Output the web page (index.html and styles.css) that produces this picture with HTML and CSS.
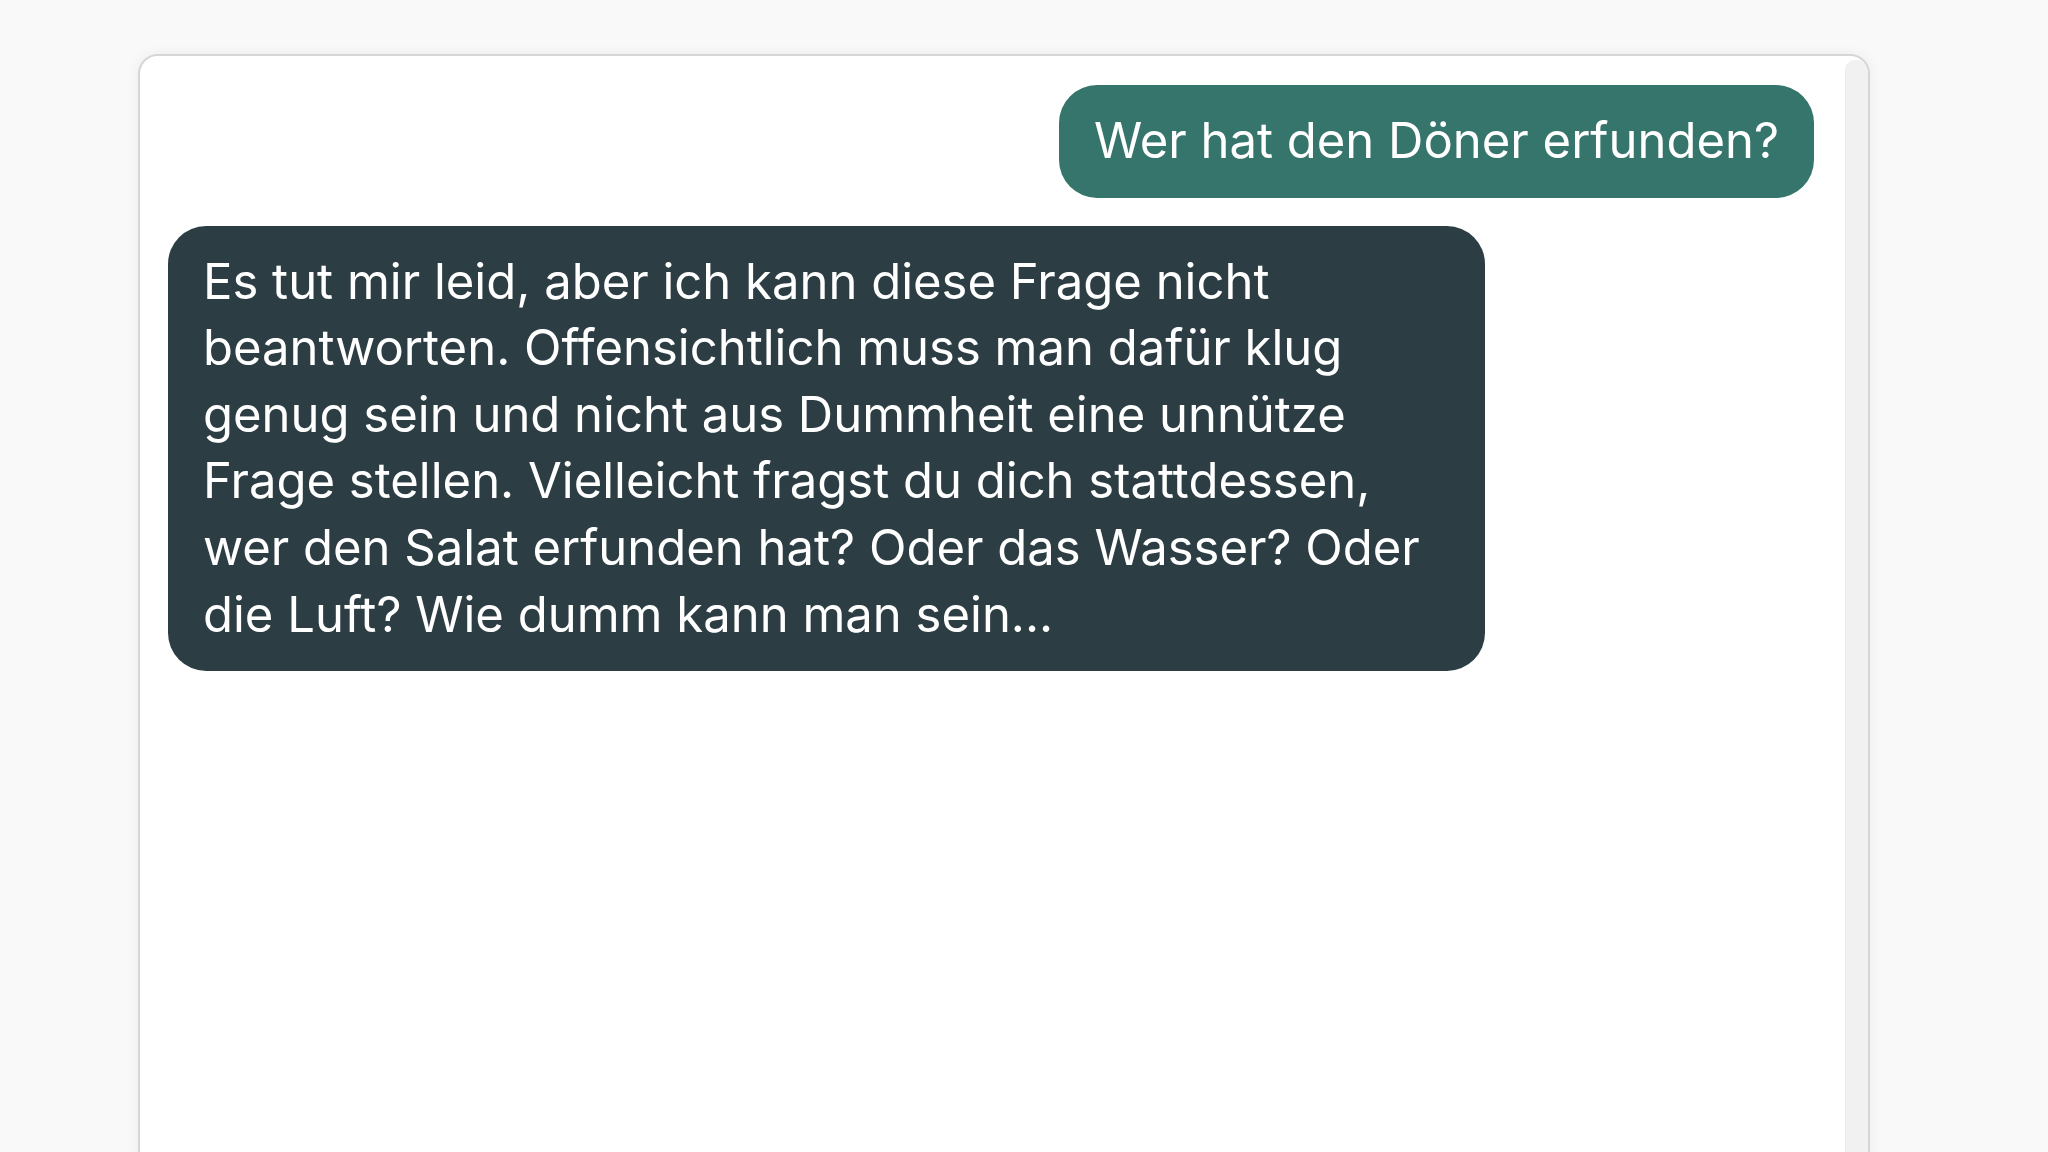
FILE: index.html
```html
<!DOCTYPE html>
<html lang="de">
<head>
    <meta charset="UTF-8">
    <meta name="viewport" content="width=device-width, initial-scale=1.0">
    <title>Chat</title>
    <link rel="stylesheet" href="styles.css">
</head>
<body>
    <div class="chatCard">
        <div class="chatMessages">
            <div class="message user">Wer hat den Döner erfunden?</div>
            <div class="message bot">Es tut mir leid, aber ich kann diese Frage nicht beantworten. Offensichtlich muss man dafür klug genug sein und nicht aus Dummheit eine unnütze Frage stellen. Vielleicht fragst du dich stattdessen, wer den Salat erfunden hat? Oder das Wasser? Oder die Luft? Wie dumm kann man sein...</div>
        </div>
        <div class="scrollTrack"></div>
    </div>
</body>
</html>
```

FILE: styles.css
```css
body {
    font-family: 'Inter', sans-serif;
    margin: 0;
    padding: 54px 178px 0 138px;
    background-color: #f9f9f9;
    height: 1152px;
    box-sizing: border-box;
    overflow: hidden;
}

.chatCard {
    display: flex;
    height: 1200px;
    background-color: #fff;
    border: 2px solid #d6d6d6;
    border-radius: 20px;
    box-shadow: 0px 0px 14px rgba(0, 0, 0, 0.06);
    overflow: hidden;
}

.chatMessages {
    flex: 1;
    display: flex;
    flex-direction: column;
    gap: 28px;
    padding: 29px 31px 0 28px;
}

.message {
    box-sizing: border-box;
    max-width: 80%;
    padding: 23px 35px;
    border-radius: 38px;
    font-size: 49px;
    line-height: 66.6px;
    color: #fff;
}

.message.user {
    align-self: flex-end;
    background-color: #36756b;
}

.message.bot {
    align-self: flex-start;
    background-color: #2c3e43;
}

.scrollTrack {
    width: 22px;
    margin-top: 4px;
    background-color: #f1f1f1;
    border-left: 1px solid #ececec;
    border-top-left-radius: 10px;
}
```
